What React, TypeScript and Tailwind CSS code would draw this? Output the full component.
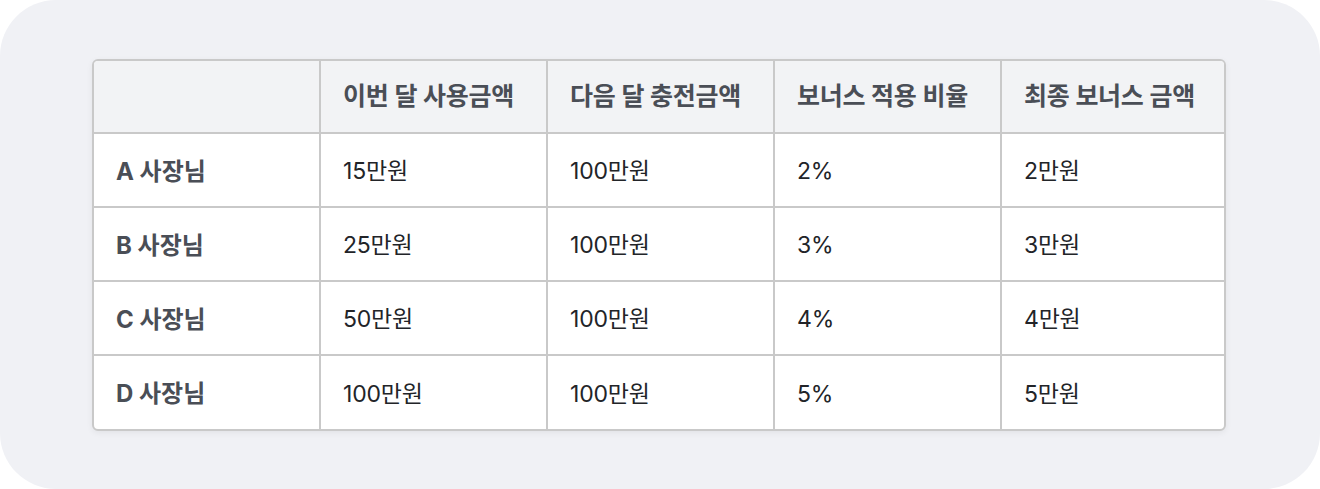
const headers = ["이번 달 사용금액", "다음 달 충전금액", "보너스 적용 비율", "최종 보너스 금액"];

const rows = [
  { name: "A 사장님", values: ["15만원", "100만원", "2%", "2만원"] },
  { name: "B 사장님", values: ["25만원", "100만원", "3%", "3만원"] },
  { name: "C 사장님", values: ["50만원", "100만원", "4%", "4만원"] },
  { name: "D 사장님", values: ["100만원", "100만원", "5%", "5만원"] },
];

const font = { fontFamily: "Inter, 'Noto Sans CJK KR', sans-serif" };

export default function App() {
  return (
    <div className="w-[1320px] h-[489px] bg-white" style={font}>
      <div className="h-full rounded-[56px] bg-[#f0f1f5] pt-[59px] pl-[92px] pr-[94px]">
        <div className="overflow-hidden rounded-md border-2 border-[#c9c9c9] bg-white shadow-[0_2px_6px_rgba(0,0,0,0.06)]">
          <table className="w-full table-fixed border-collapse">
            <thead>
              <tr className="h-[72px] bg-[#f2f3f5]">
                <th className="w-[226px]" />
                {headers.map((h, i) => (
                  <th
                    key={h}
                    className={
                      (i < 3 ? "w-[227px] " : "") +
                      "border-l-2 border-[#c9c9c9] px-[22px] text-left text-[25px] font-semibold tracking-[-0.3px] text-[#4a4e56]"
                    }
                  >
                    {h}
                  </th>
                ))}
              </tr>
            </thead>
            <tbody>
              {rows.map((r) => (
                <tr key={r.name} className="h-[74px] border-t-2 border-[#c9c9c9]">
                  <td className="pt-[3px] px-[22px] text-[24px] font-bold text-[#4a4e56]">{r.name}</td>
                  {r.values.map((v, i) => (
                    <td key={i} className="border-l-2 border-[#c9c9c9] pt-[3px] px-[22px] text-[23px] tracking-[-0.2px] text-[#222428]">
                      {v}
                    </td>
                  ))}
                </tr>
              ))}
            </tbody>
          </table>
        </div>
      </div>
    </div>
  );
}
